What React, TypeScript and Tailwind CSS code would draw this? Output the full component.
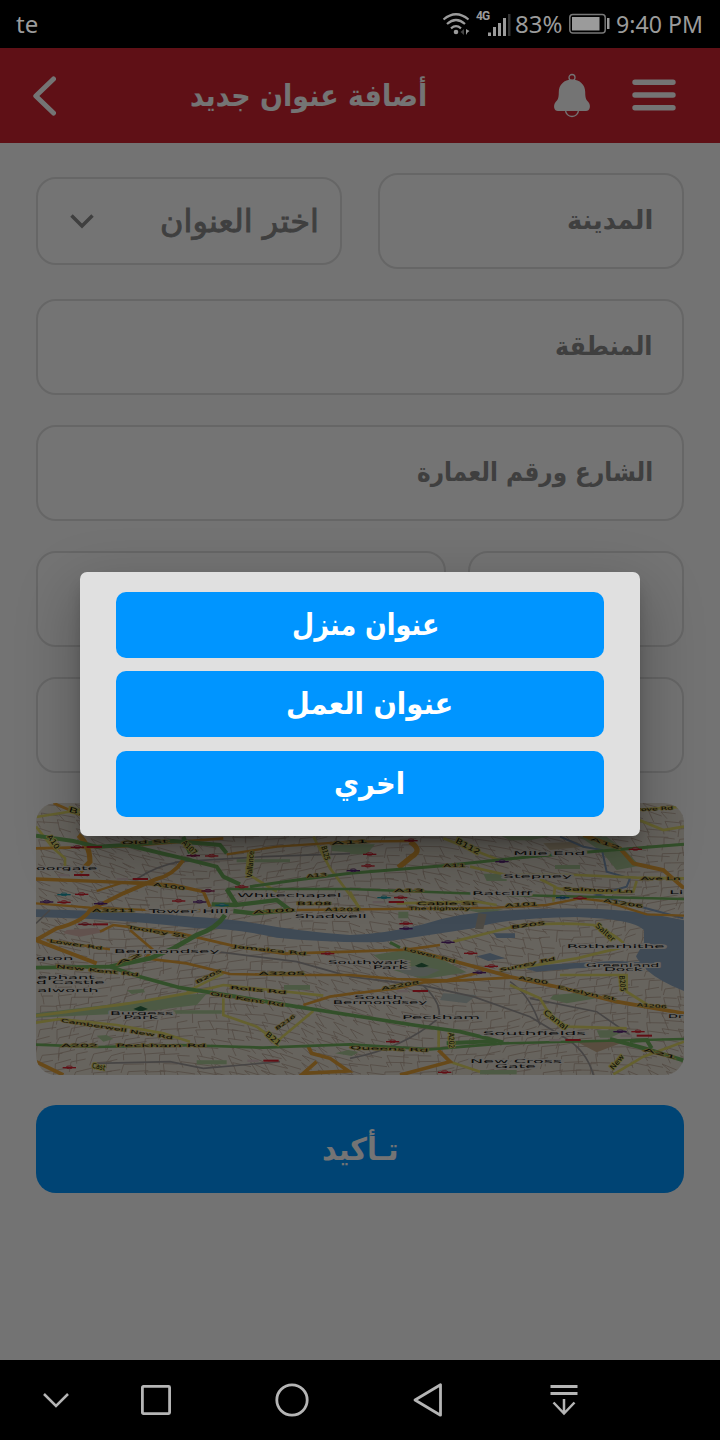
import { useLayoutEffect, useRef, useState } from "react";

/* Arabic text condensed horizontally so that it fills the width of its box. */
function FitText({ text, className }: { text: string; className: string }) {
  const inner = useRef<HTMLSpanElement>(null);
  const [scale, setScale] = useState(1);
  useLayoutEffect(() => {
    const el = inner.current;
    if (el && el.parentElement) {
      setScale(el.parentElement.offsetWidth / el.offsetWidth);
    }
  }, [text]);
  return (
    <span
      dir="rtl"
      className={`block shrink-0 whitespace-nowrap font-['DejaVu_Sans',sans-serif] ${className}`}
    >
      <span
        ref={inner}
        className="inline-block origin-right"
        style={{ transform: `scaleX(${scale})` }}
      >
        {text}
      </span>
    </span>
  );
}

function StatusBar() {
  return (
    <div className="flex h-12 shrink-0 items-center bg-black pl-4 font-['Noto_Sans',sans-serif] text-[24px] leading-none text-[#9b9b9b]">
      <span className="w-[426px]">te</span>
      <svg width="28" height="26" viewBox="0 0 28 26" className="shrink-0" fill="none" stroke="#9b9b9b">
        <path d="M1.500 8.500 Q14 -2 26.500 8.500" strokeWidth="2.200" />
        <path d="M5 13 Q14 5 23 13" strokeWidth="2.200" />
        <path d="M9 17.300 Q14 13 19 17.300" strokeWidth="2.200" />
        <circle cx="14" cy="21" r="2.300" fill="#9b9b9b" stroke="none" />
        <path d="M22 18 L18.500 21 L22 24Z" fill="#444" stroke="none" />
        <path d="M24 18 L27.500 20 L25.500 21.500 L24 24Z" fill="#9b9b9b" stroke="none" />
      </svg>
      <div className="ml-1.5 flex h-[26px] w-[37px] shrink-0 items-end">
        <span className="h-[27px] w-[12px] font-['Roboto',sans-serif] text-[12px] leading-[12px] font-bold tracking-[-1px]">
          4G
        </span>
        <svg width="24" height="24" viewBox="0 0 24 24" className="shrink-0">
          <path d="M0 19.500h3v3.500h-3zM5 14h3v9h-3zM10 10h3v13h-3zM15 5h3v18h-3z" fill="#9b9b9b" />
          <path d="M20 1h2.500v22h-2.500z" fill="#333" />
        </svg>
      </div>
      <span className="ml-[2px] w-[53px] whitespace-nowrap">83%</span>
      <svg width="42" height="22" viewBox="0 0 42 22" className="shrink-0">
        <rect x="1.800" y="1.500" width="35.400" height="18.500" rx="3" fill="none" stroke="#777" strokeWidth="1.500" />
        <rect x="4" y="4" width="27.500" height="13.500" fill="#9b9b9b" />
        <rect x="39" y="5" width="2.500" height="11" fill="#9b9b9b" />
      </svg>
      <span className="ml-[6px] origin-left scale-x-[0.965] whitespace-nowrap">9:40 PM</span>
    </div>
  );
}

function Header() {
  return (
    <header className="flex h-[95px] shrink-0 items-center bg-[#d12532]">
      <svg width="24" height="42" viewBox="0 0 24 42" className="ml-[32px] shrink-0" fill="none" stroke="white" strokeWidth="5" strokeLinecap="round" strokeLinejoin="round">
        <path d="M21.500 4 L3.800 21 L21.500 38" />
      </svg>
      <FitText text="أضافة عنوان جديد" className="ml-[134px] w-[237px] text-[30px] leading-[44px] font-bold text-white" />
      <svg width="38" height="46" viewBox="0 0 38 46" className="ml-[126px] shrink-0" fill="white">
        <circle cx="19" cy="4.500" r="3" fill="none" stroke="white" strokeWidth="1.300" />
        <path d="M12.500 37 A6.500 6.500 0 0 0 25.500 37" fill="none" stroke="white" strokeWidth="1.300" />
        <path d="M19 6.500 C11 6.500 5.800 12 5.800 19 C5.800 26 4.500 27 2.300 29.500 C0 33 1 38 5 38 H33 C37 38 38 33 35.700 29.500 C33.500 27 32.200 26 32.200 19 C32.200 12 27 6.500 19 6.500Z" />
      </svg>
      <svg width="44" height="32" viewBox="0 0 44 32" className="mb-px ml-[41px] shrink-0" stroke="white" strokeWidth="5.400" strokeLinecap="round">
        <path d="M3 3.300H41M3 16H41M3 28.700H41" />
      </svg>
    </header>
  );
}

function Field({ className, children }: { className: string; children?: React.ReactNode }) {
  return (
    <div className={`flex h-24 items-center justify-end rounded-[20px] border-2 border-[#e0e0e0] bg-white pr-[29px] pb-[3px] ${className}`}>
      {children}
    </div>
  );
}

/* ---------- map ---------- */

function sideStreets(): string {
  let seed = 17;
  const rnd = () => {
    seed = (seed * 16807) % 2147483647;
    return seed / 2147483647;
  };
  let d = "";
  for (let gx = 0; gx < 38; gx++) {
    for (let gy = 0; gy < 34; gy++) {
      const x = 18 + gx * 52 + rnd() * 20;
      const y = 24 + gy * 25 + rnd() * 10;
      const tilt = Math.sin(gx / 4 + gy / 7) * 14;
      d += `M${x.toFixed(0)} ${y.toFixed(0)}l${(30 + rnd() * 40).toFixed(0)} ${(tilt + rnd() * 8).toFixed(0)}`;
      d += `M${x.toFixed(0)} ${y.toFixed(0)}l${(tilt + rnd() * 14).toFixed(0)} ${(14 + rnd() * 22).toFixed(0)}`;
    }
  }
  return d;
}

type Label = [text: string, x: number, y: number, width: number, rotate?: number];

const places: Label[] = [
  ["oorgate", 18, 224, 184],
  ["Whitechapel", 622, 306, 312],
  ["Tower Hill", 356, 354, 240],
  ["Shadwell", 794, 369, 216],
  ["Bermondsey", 252, 475, 316],
  ["gton", 18, 495, 112],
  ["ephant", 22, 552, 172],
  ["d Castle", 18, 567, 206],
  ["alworth", 22, 592, 184],
  ["Burgess", 240, 660, 190],
  ["Park", 280, 673, 104],
  ["Mile End", 1450, 180, 216],
  ["Stepney", 1420, 248, 206],
  ["Ratcliff", 1326, 300, 180],
  ["Southwark", 894, 508, 240],
  ["Park", 1028, 521, 106],
  ["Rotherhithe", 1610, 460, 294],
  ["Greenland", 1668, 515, 220],
  ["Dock", 1722, 527, 116],
  ["South", 972, 612, 148],
  ["Bermondsey", 908, 627, 284],
  ["Peckham", 1116, 673, 234],
  ["Southfields", 1358, 720, 310],
  ["New Cross", 1320, 804, 276],
  ["Gate", 1394, 819, 124],
  ["Li", 1918, 298, 42],
  ["Dr", 1914, 669, 46],
];

const roadNames: Label[] = [
  ["Old St", 275, 148, 140, -2],
  ["A3211", 186, 350, 130],
  ["A100", 370, 272, 96, 8],
  ["Tooley St", 290, 400, 180, 9],
  ["Lower Rd", 58, 442, 160, 8],
  ["New Kent Rd", 78, 518, 250, 6],
  ["Jamaica Rd", 610, 458, 220, 6],
  ["A3205", 686, 541, 140],
  ["Old Kent Rd", 540, 600, 225, 9],
  ["Rolls Rd", 600, 582, 170, 5],
  ["Peckham Rd", 258, 757, 270],
  ["A202", 94, 757, 110],
  ["Camberwell New Rd", 92, 680, 340, 9],
  ["B108", 800, 329, 105],
  ["A1203", 885, 348, 105],
  ["A13", 830, 248, 62, -5],
  ["A100", 670, 356, 125, -3],
  ["A11", 905, 149, 110, -3],
  ["A2", 262, 510, 80, -20],
  ["B205", 500, 566, 85, -25],
  ["B216", 740, 706, 70, -35],
  ["Cable St", 1160, 329, 180],
  ["The Highway", 1136, 346, 185],
  ["A13", 1092, 291, 90],
  ["A101", 1425, 336, 100, -3],
  ["A11", 1240, 217, 68],
  ["Salmon Ln", 1600, 286, 210, 2],
  ["A1206", 1720, 320, 120, 9],
  ["B205", 1444, 401, 104, -7],
  ["Lower Rd", 1120, 465, 160, 14],
  ["Surrey Rd", 1410, 530, 170, -12],
  ["A200", 1465, 552, 90, 10],
  ["Evelyn St", 1580, 580, 180, 12],
  ["A1206", 1820, 634, 90, 4],
  ["A2208", 1055, 586, 115, -10],
  ["Queens Rd", 960, 762, 235, 2],
  ["A21", 1840, 768, 100, 14],
  ["Ave Ln", 1832, 254, 120],
  ["Grove Rd", 1800, 50, 130, -3],
  ["A12", 1680, 135, 95, 18],
];

const steepNames: Label[] = [
  ["A10", 50, 125, 48, 55],
  ["Vallance", 665, 248, 80, -85],
  ["B125", 874, 155, 44, 75],
  ["Salter", 1695, 394, 70, 42],
  ["B205", 1768, 542, 48, 85],
  ["Canal", 1540, 655, 84, 38],
  ["A202", 1256, 714, 46, 88],
  ["New", 1750, 826, 52, -50],
  ["B21", 705, 720, 52, 40],
  ["A107", 455, 145, 52, 45],
  ["Cast", 185, 818, 40, 12],
  ["B112", 1275, 142, 80, 28],
  ["B1", 115, 50, 55, 15],
];

function LabelSet({ labels, halo, size, haloWidth }: { labels: Label[]; halo: string; size: number; haloWidth: number }) {
  return (
    <g fontSize={size} fill="#151515" stroke={halo} strokeWidth={haloWidth} paintOrder="stroke" strokeLinejoin="round">
      {labels.map(([text, x, y, width, rotate], i) => (
        <text
          key={i}
          x={x}
          y={y}
          textLength={width}
          lengthAdjust="spacingAndGlyphs"
          transform={rotate ? `rotate(${rotate} ${x} ${y})` : undefined}
        >
          {text}
        </text>
      ))}
    </g>
  );
}

const stations: [number, number, string][] = [
  [142, 156, "#b3202c"], [490, 181, "#8a1d4e"], [545, 182, "#d6232f"], [635, 275, "#d6232f"],
  [534, 287, "#8a1d4e"], [155, 297, "#d6232f"], [102, 298, "#1d97a5"], [50, 320, "#5b2478"],
  [102, 321, "#d6232f"], [212, 325, "#5b2478"], [446, 317, "#d6232f"], [509, 320, "#5b2478"],
  [576, 330, "#1d97a5"], [165, 387, "#b3202c"], [893, 475, "#d6232f"], [970, 226, "#5b2478"],
  [118, 817, "#d6232f"], [1019, 177, "#d6232f"], [1014, 212, "#d6232f"], [1143, 136, "#b3202c"],
  [1416, 199, "#5b2478"], [1816, 162, "#d6232f"], [1062, 307, "#1d97a5"], [1112, 307, "#d6232f"],
  [1598, 307, "#1d6c95"], [1650, 309, "#d6232f"], [1128, 385, "#d6232f"], [1128, 400, "#5b2478"],
  [1254, 441, "#5b2478"], [1322, 474, "#d6232f"], [1384, 513, "#d6232f"], [1348, 532, "#5b2478"],
  [1770, 709, "#5b2478"], [1824, 709, "#d6232f"], [1088, 739, "#d6232f"], [1244, 831, "#d6232f"],
];

const railStations: [number, number][] = [
  [192, 156], [154, 240], [330, 252], [210, 388], [722, 797], [1098, 321], [1170, 588], [1628, 735], [1842, 722],
];

function CityMap() {
  return (
    <svg viewBox="18 24 1944 816" preserveAspectRatio="none" className="block h-[272px] w-full rounded-[20px] bg-[#e3dccf]" fontFamily="'DejaVu Sans', sans-serif">
      <path d={sideStreets()} fill="none" stroke="#b9a797" strokeWidth="2.500" />

      {/* parks and blocks */}
      <g fill="#a9c795">
        <path d="M18 655 L330 618 L430 600 L530 596 L500 630 L300 655 L18 668Z" />
        <path d="M430 646H575V656H430ZM762 570H840V584H762ZM500 796H590V808H500ZM200 722l30 -2 20 12-30 8ZM290 586l50-4 5 10-40 5ZM915 775l40-10 30 6-20 12ZM905 150H1000V175L905 168Z" />
        <path d="M1030 480 L1140 462 L1230 490 L1310 532 L1180 553 L1090 525Z" />
        <path d="M1570 600 L1680 590 L1700 610 L1610 625 L1560 612Z" />
        <path d="M1650 125 H1730 L1790 170 L1830 212 L1760 225 L1715 170Z" />
        <path d="M1415 124H1560L1500 136H1440ZM1575 210H1650V222H1575ZM1360 236H1430V258H1370ZM1300 343H1420L1370 358ZM960 148H1035L1010 178H960ZM1105 350H1135V370H1105ZM1700 706H1790L1740 728H1710ZM1350 825H1460V838H1350ZM620 193H780V202H620Z" />
      </g>
      <path d="M1640 740 L1790 738 L1700 772Z" fill="#c4a98a" />
      <path d="M110 405 L200 398 L225 410 L150 425 L100 415Z" fill="#d8b4ac" />
      <path d="M1540 145 L1640 140 L1660 155 L1560 165Z" fill="#c9b998" />
      <path d="M1240 595 L1340 600 L1310 625 L1230 615Z" fill="#b4bfba" />
      <path d="M1100 520q60 -15 130 5l-40 18q-60 8 -90 -23Z" fill="#b4c0b4" />

      {/* water */}
      <g fill="#8ba3bc">
        <path d="M18 343 Q210 347 375 357 T650 380 Q800 410 960 420 Q1060 418 1180 388 Q1290 352 1430 346 Q1700 330 1870 358 L1962 376 V588 Q1890 560 1850 525 Q1820 492 1818 484 L1842 442 L1842 405 Q1810 372 1640 366 Q1430 368 1330 400 Q1200 420 1060 441 Q900 444 740 428 Q620 400 500 400 Q330 380 180 372 L18 366Z" />
        <path d="M1500 512 L1620 505 L1750 498 L1850 502 L1770 517 L1640 520 L1520 530 L1490 522ZM1340 484l40-10 45 16-50 8ZM1390 415h65v14h-55Z" />
      </g>
      <path d="M1590 125 L1660 155 L1716 165 L1730 230 L1800 250 L1790 275 L1700 300 L1960 370" fill="none" stroke="#7f9ab8" strokeWidth="6" />
      <path d="M1345 355 L1370 358 L1360 402 L1335 402Z" fill="#aaa295" />

      {/* railways */}
      <g fill="none" stroke="#9c9997" strokeWidth="5">
        <path d="M18 385 L60 345 M320 252 Q380 212 450 200 L700 185 L960 176" />
        <path d="M560 470 L800 500 L960 545 L1180 572 L1330 605 L1500 665 L1600 725 Q1670 765 1690 840" />
        <path d="M1180 572 Q1240 630 1225 670 Q1120 760 960 790 M1440 560 Q1500 600 1530 690" />
        <path d="M1500 610 L1700 650 L1800 720 M200 805 L420 800 L520 820 L750 800" />
      </g>

      {/* yellow roads */}
      <g fill="none" stroke="#ddd568" strokeWidth="8">
        <path d="M18 95 L70 160 L105 190 V215 M18 66 L150 45" />
        <path d="M655 175 L650 235 L740 290 M850 125 L900 220 L990 340" />
        <path d="M18 662 Q200 640 330 620 L500 590 L580 570 L880 602 M470 590 L580 535" />
        <path d="M18 683 L90 672 L260 690 L400 715 L480 740 M580 610 V660 L680 695 L740 740 L850 648" />
        <path d="M1240 130 L1420 200 M1320 215 L1430 240 L1640 240 L1820 248 L1962 250" />
        <path d="M1530 252 L1575 275 L1570 320 M1570 275 Q1640 300 1810 290 L1820 258" />
        <path d="M1100 325 L1340 320 L1400 330 M1270 440 L1450 395 Q1560 380 1690 390 Q1780 430 1785 455 L1640 490 L1460 520" />
        <path d="M1440 570 L1530 610 L1560 660 L1610 695 L1790 700 M1590 540 H1790 V590 L1870 640" />
        <path d="M1226 700 V765 M1260 800 L1350 830 M1962 740 L1840 785 L1750 838 M1810 45 L1962 35 M1820 72 L1900 105 L1962 95 M960 290 L990 345" />
      </g>

      {/* orange roads */}
      <g fill="none" stroke="#e3a038" strokeWidth="10">
        <path d="M70 24 L180 72 M18 160 L280 154 L580 130" strokeWidth="8" />
        <path d="M145 120 Q180 150 180 200 L150 230" strokeWidth="15" />
        <path d="M18 252 L220 260 L430 270 L520 290 L540 335" />
        <path d="M460 195 Q430 240 380 252 L280 295 L180 345 Q160 380 80 400 L18 435 L200 505" strokeWidth="12" />
        <path d="M200 288 L280 262 L370 262 M18 325 L180 338 L380 346 L560 345" strokeWidth="7" />
        <path d="M210 410 L250 390 L450 415 L620 455 L760 476 L960 470 L1130 464 L1230 450" strokeWidth="8" />
        <path d="M300 405 L370 465 L345 490 L470 505 L600 537 L760 540 L960 540 L1100 552 L1250 556 L1360 530" strokeWidth="8" />
        <path d="M1130 462 L1240 490 L1370 525 L1440 545 L1600 580 L1760 620 L1962 655" strokeWidth="11" />
        <path d="M960 597 L1100 580 L1180 562 L1440 548 M820 630 L900 605 L990 592" strokeWidth="8" />
        <path d="M50 435 L240 463 M590 178 L740 155 L960 140 L1150 138" strokeWidth="7" />
        <path d="M1140 140 Q1180 165 1145 185 L1105 218" strokeWidth="16" />
        <path d="M800 345 L1080 342 L1400 338 L1550 330 L1650 310 L1720 318 L1850 358 L1962 362" strokeWidth="7" />
        <path d="M1660 120 L1770 160 L1810 205 L1900 225 L1962 280" strokeWidth="12" />
        <path d="M1110 840 L1260 800 L1225 765 M18 800 L100 840 M835 755 L845 775 L900 790 L955 828 L820 835 L860 800" strokeWidth="11" />
      </g>

      {/* green trunk roads */}
      <g fill="none" stroke="#70b05e" strokeWidth="12">
        <path d="M18 122 L130 138 L200 155 L290 150 L460 190 L560 215 L580 245 L630 268" />
        <path d="M290 150 L430 138 L570 150 L590 175 M460 125 L480 175" />
        <path d="M660 275 L800 255 L960 235 L1240 212 L1500 185 L1962 148" strokeWidth="9" />
        <path d="M590 282 H960 L1440 300 L1962 312" strokeWidth="8" />
        <path d="M590 282 L620 330 L740 315 L780 345 L670 355 L610 348 M620 330 L545 328" strokeWidth="13" />
        <path d="M585 360 Q560 400 500 420 L430 460 L360 490 L240 515" strokeWidth="14" />
        <path d="M18 518 L240 515 L330 545 L450 578 L620 605 L800 635 L960 660 L1150 690 L1290 710 L1420 742" strokeWidth="11" />
        <path d="M18 749 L200 756 L450 750 L700 758 L960 748 L1200 763 L1420 745 L1700 738 L1962 732" strokeWidth="8" />
        <path d="M1740 732 L1850 762 L1962 797 M1800 738 L1850 735 L1865 760 M1250 745 L1400 738" strokeWidth="12" />
        <path d="M1080 442 L1110 458" strokeWidth="9" />
      </g>

      <path d="M310 642l22-9 22 9-16 6h-12ZM1155 512l20-9 22 10-16 4h-16Z" fill="#2f6b45" />

      {railStations.map(([x, y], i) => (
        <g key={i}>
          <rect x={x - 70} y={y - 3} width="34" height="7" fill="#d9c4c4" />
          <rect x={x - 22} y={y - 3} width="46" height="6" fill="#d6232f" />
        </g>
      ))}
      {stations.map(([x, y, color], i) => (
        <g key={i}>
          <ellipse cx={x} cy={y} rx="10" ry="4" fill="#ccc" stroke={color} strokeWidth="2.500" />
          <rect x={x - 20} y={y - 1} width="40" height="4" fill={color} />
        </g>
      ))}

      <LabelSet labels={roadNames} halo="#c9b45a" size={13} haloWidth={3} />
      <LabelSet labels={steepNames} halo="#ddd568" size={22} haloWidth={6} />
      <LabelSet labels={places} halo="#dedad2" size={15.5} haloWidth={6} />
    </svg>
  );
}

function AddressForm() {
  return (
    <main className="flex flex-1 flex-col gap-[30px] px-9 pt-[30px]">
      <div className="flex items-center justify-between">
        <div className="flex h-[88px] w-[306px] items-center justify-between rounded-[20px] border-2 border-[#e0e0e0] bg-white pr-[21px] pl-8">
          <svg width="24" height="15" viewBox="0 0 24 15" fill="none" stroke="#8b8b8b" strokeWidth="3.500">
            <path d="M1.500 1.500 L12 12 L22.500 1.500" />
          </svg>
          <FitText text="اختر العنوان" className="w-[159px] text-[31px] leading-[44px] text-[#8b8b8b] [-webkit-text-stroke:0.9px_#8b8b8b]" />
        </div>
        <Field className="w-[306px]">
          <FitText text="المدينة" className="w-[86px] text-[26px] leading-[40px] font-bold text-[#8b8b8b]" />
        </Field>
      </div>
      <Field className="w-full">
        <FitText text="المنطقة" className="w-[98px] text-[26px] leading-[40px] font-bold text-[#8b8b8b]" />
      </Field>
      <Field className="w-full">
        <FitText text="الشارع ورقم العمارة" className="w-[236px] text-[26px] leading-[40px] font-bold text-[#8b8b8b]" />
      </Field>
      <div className="flex justify-between">
        <Field className="w-[410px]" />
        <Field className="w-[216px]" />
      </div>
      <Field className="w-full" />
      <CityMap />
      <button className="flex h-[88px] w-full items-center justify-center rounded-[20px] bg-[#0095ff]">
        <FitText text="تـأكيد" className="w-[76px] text-[31px] leading-[44px] font-bold text-white" />
      </button>
    </main>
  );
}

function DialogButton({ text, className }: { text: string; className: string }) {
  return (
    <button className="flex h-[66px] w-[488px] items-center rounded-[10px] bg-[#0095ff]">
      <FitText text={text} className={`text-[30px] leading-[44px] font-bold text-white ${className}`} />
    </button>
  );
}

function AddressTypeDialog() {
  return (
    <div className="absolute inset-0 flex items-center justify-center overflow-hidden bg-black/[0.545]">
      <div className="flex h-[264px] w-[560px] flex-col items-center justify-center gap-[13.5px] rounded-[7px] bg-[#e0e0e0] shadow-[0_22px_60px_6px_rgba(0,0,0,0.24),0_10px_16px_-6px_rgba(0,0,0,0.35)]">
        <DialogButton text="عنوان منزل" className="ml-[176px] w-[147px]" />
        <DialogButton text="عنوان العمل" className="ml-[170px] w-[167px]" />
        <DialogButton text="اخري" className="ml-[218px] w-[71px]" />
      </div>
    </div>
  );
}

function NavigationBar() {
  return (
    <nav className="flex h-20 shrink-0 items-center bg-black pl-[42px]">
      <svg width="28" height="18" viewBox="0 0 28 18" className="shrink-0" fill="none" stroke="#b5b5b5" strokeWidth="2.500">
        <path d="M2 3 L14 15 L26 3" />
      </svg>
      <svg width="32" height="32" viewBox="0 0 32 32" className="ml-[70px] shrink-0" fill="none" stroke="#b5b5b5" strokeWidth="2.800">
        <rect x="2.400" y="2.400" width="27.200" height="27.200" rx="1" />
      </svg>
      <svg width="34" height="34" viewBox="0 0 34 34" className="ml-[103px] shrink-0" fill="none" stroke="#b5b5b5" strokeWidth="2.800">
        <circle cx="17" cy="17" r="15.200" />
      </svg>
      <svg width="32" height="36" viewBox="0 0 32 36" className="ml-[102px] shrink-0" fill="none" stroke="#b5b5b5" strokeWidth="2.800" strokeLinejoin="round">
        <path d="M29.500 2.800 V33.200 L4 18Z" />
      </svg>
      <svg width="28" height="32" viewBox="0 0 28 32" className="ml-[107px] shrink-0" fill="none" stroke="#b5b5b5" strokeWidth="2.800">
        <path d="M0.500 2.500H27.500M0.500 9.500H27.500" />
        <path d="M14 15V29M3.500 18.500 L14 29.500 L24.500 18.500" strokeWidth="2.500" />
      </svg>
    </nav>
  );
}

export default function App() {
  return (
    <div className="flex h-[1440px] w-[720px] flex-col overflow-hidden bg-black">
      <StatusBar />
      <div className="relative flex flex-1 flex-col bg-[#fcfcfc]">
        <Header />
        <AddressForm />
        <AddressTypeDialog />
      </div>
      <NavigationBar />
    </div>
  );
}
